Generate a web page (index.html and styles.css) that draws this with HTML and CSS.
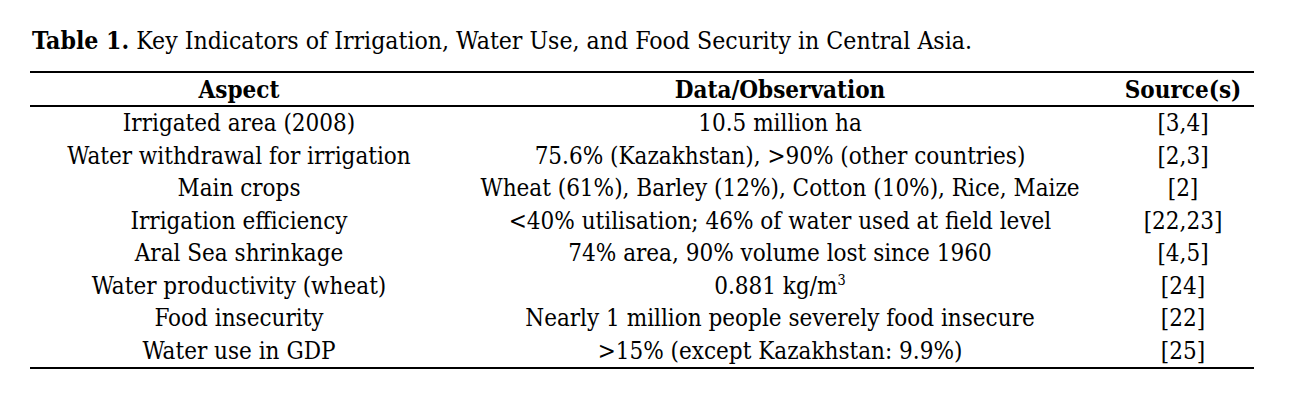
FILE: index.html
```html
<!DOCTYPE html>
<html lang="en">
<head>
<meta charset="utf-8">
<title>Table 1</title>
<link rel="stylesheet" href="styles.css">
</head>
<body>
<div class="page">
  <div class="caption"><b>Table 1.</b> Key Indicators of Irrigation, Water Use, and Food Security in Central Asia.</div>
  <table class="data">
    <colgroup>
      <col class="c1"><col class="c2"><col class="c3">
    </colgroup>
    <thead>
      <tr><th>Aspect</th><th>Data/Observation</th><th>Source(s)</th></tr>
    </thead>
    <tbody>
      <tr><td>Irrigated area (2008)</td><td>10.5 million ha</td><td>[3,4]</td></tr>
      <tr><td>Water withdrawal for irrigation</td><td>75.6% (Kazakhstan), &gt;90% (other countries)</td><td>[2,3]</td></tr>
      <tr><td>Main crops</td><td>Wheat (61%), Barley (12%), Cotton (10%), Rice, Maize</td><td>[2]</td></tr>
      <tr><td>Irrigation efficiency</td><td>&lt;40% utilisation; 46% of water used at field level</td><td>[22,23]</td></tr>
      <tr><td>Aral Sea shrinkage</td><td>74% area, 90% volume lost since 1960</td><td>[4,5]</td></tr>
      <tr><td>Water productivity (wheat)</td><td>0.881 kg/m<sup>3</sup></td><td>[24]</td></tr>
      <tr><td>Food insecurity</td><td>Nearly 1 million people severely food insecure</td><td>[22]</td></tr>
      <tr><td>Water use in GDP</td><td>&gt;15% (except Kazakhstan: 9.9%)</td><td>[25]</td></tr>
    </tbody>
  </table>
</div>
</body>
</html>
```
FILE: styles.css
```css
html, body {
  margin: 0;
  padding: 0;
  background: #ffffff;
}
body {
  font-family: "DejaVu Serif Condensed", "DejaVu Serif", serif;
  font-stretch: condensed;
  color: #000000;
  font-size: 24px;
}
.page {
  padding: 25px 0 0 30px;
}
.caption {
  padding-left: 2px;
  font-size: 24.6px;
  line-height: 32px;
  height: 32px;
  margin-bottom: 14px;
}
.caption b {
  font-weight: bold;
}
.data {
  border-collapse: collapse;
  width: 1224px;
  table-layout: fixed;
  border-top: 2px solid #000;
  border-bottom: 2px solid #000;
}
.c1 { width: 418px; }
.c2 { width: 664px; }
.c3 { width: 142px; }
.data th, .data td {
  padding: 1px 0 0;
  text-align: center;
  white-space: nowrap;
}
.data th {
  font-weight: bold;
  height: 31px;
  line-height: 31px;
  border-bottom: 2px solid #000;
}
.data td {
  height: 31.5px;
  line-height: 31.5px;
}
.data sup {
  font-size: 0.6em;
  line-height: 0;
  vertical-align: 0.6em;
}
```
